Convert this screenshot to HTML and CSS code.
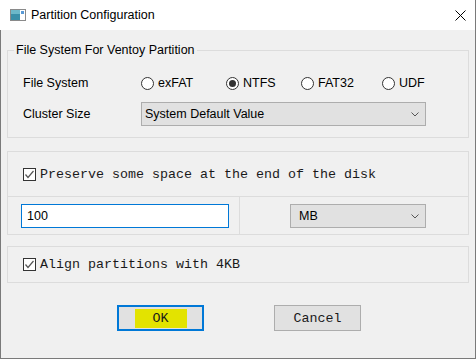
FILE: index.html
```html
<!DOCTYPE html>
<html lang="en">
<head>
    <meta charset="UTF-8">
    <meta name="viewport" content="width=device-width, initial-scale=1.0">
    <title>Partition Configuration</title>
    <link rel="stylesheet" href="styles.css">
</head>
<body>
    <div class="window">
        <div class="titlebar">
            <svg class="app-icon" width="16" height="12" viewBox="0 0 16 12">
                <rect x="0.5" y="0.5" width="15" height="11" fill="#fff" stroke="#8a8a8a"/>
                <rect x="1" y="1" width="9" height="10" fill="#3a8fa8"/>
                <rect x="1" y="1" width="9" height="4" fill="#6cb8c9"/>
                <rect x="11" y="2" width="3" height="3" fill="#5a9ad6"/>
            </svg>
            <span class="title">Partition Configuration</span>
            <svg class="close" width="11" height="11" viewBox="0 0 11 11">
                <path d="M0.5 0.5 L10.5 10.5 M10.5 0.5 L0.5 10.5" stroke="#000" stroke-width="1"/>
            </svg>
        </div>

        <div class="content">
            <fieldset class="group fs-group">
                <legend>File System For Ventoy Partition</legend>
                <div class="row radio-row">
                    <span class="label">File System</span>
                    <div class="radios">
                        <span class="radio"><span class="dot"></span>exFAT</span>
                        <span class="radio checked"><span class="dot"></span>NTFS</span>
                        <span class="radio"><span class="dot"></span>FAT32</span>
                        <span class="radio"><span class="dot"></span>UDF</span>
                    </div>
                </div>
                <div class="row select-row">
                    <span class="label">Cluster Size</span>
                    <div class="combo cluster">
                        <span>System Default Value</span>
                        <svg class="chevron" width="8" height="5" viewBox="0 0 8 5"><path d="M0.5 0.5 L4 4 L7.5 0.5" fill="none" stroke="#555"/></svg>
                    </div>
                </div>
            </fieldset>

            <div class="group preserve">
                <div class="check-row top-row">
                    <span class="check"><svg width="11" height="11" viewBox="0 0 11 11"><path d="M1.5 5.5 L4 8.5 L9.5 2" fill="none" stroke="#555" stroke-width="1.2"/></svg></span>
                    <span class="mono">Preserve some space at the end of the disk</span>
                </div>
                <div class="size-row">
                    <div class="size-cell"><div class="textbox">100</div></div>
                    <div class="unit-cell">
                        <div class="combo unit">
                            <span>MB</span>
                            <svg class="chevron" width="8" height="5" viewBox="0 0 8 5"><path d="M0.5 0.5 L4 4 L7.5 0.5" fill="none" stroke="#555"/></svg>
                        </div>
                    </div>
                </div>
            </div>

            <div class="group align">
                <div class="check-row">
                    <span class="check"><svg width="11" height="11" viewBox="0 0 11 11"><path d="M1.5 5.5 L4 8.5 L9.5 2" fill="none" stroke="#555" stroke-width="1.2"/></svg></span>
                    <span class="mono">Align partitions with 4KB</span>
                </div>
            </div>

            <div class="buttons">
                <button class="btn default"><span class="hl">OK</span></button>
                <button class="btn">Cancel</button>
            </div>
        </div>
    </div>
</body>
</html>
```

FILE: styles.css
```css
body {
    margin: 0;
    background: #ffffff;
    font-family: "Liberation Sans", Arial, sans-serif;
    font-size: 12.5px;
    color: #000;
}

.window {
    width: 476px;
    height: 359px;
    box-sizing: border-box;
    border-right: 1px solid #7a7a7a;
    display: flex;
    flex-direction: column;
}

.titlebar {
    height: 30px;
    background: #ffffff;
    display: flex;
    align-items: center;
    padding-left: 10px;
    flex-shrink: 0;
}

.title {
    margin-left: 5px;
    font-size: 12.5px;
    flex: 1;
}

.close {
    margin-right: 9px;
}

.content {
    flex: 1;
    background: #f0f0f0;
    border-left: 1px solid #7a7a7a;
    border-bottom: 1px solid #7a7a7a;
    padding: 0 6px;
}

.group {
    border: 1px solid #dcdcdc;
    box-sizing: border-box;
    width: 462px;
}

fieldset.fs-group {
    margin: 12px 0 0 0;
    padding: 0 0 11px 0;
    min-width: 0;
}

legend {
    margin-left: 6px;
    padding: 0 2px;
    line-height: 16px;
    font-size: 12.5px;
}

.row {
    display: flex;
    align-items: center;
    padding-left: 15px;
}

.label {
    width: 118px;
}

.radio-row {
    margin-top: 14px;
    height: 22px;
}

.select-row {
    margin-top: 8px;
    height: 24px;
}

.radios {
    display: grid;
    grid-template-columns: 85px 75px 81px auto;
}

.radio {
    display: flex;
    align-items: center;
}

.dot {
    width: 11px;
    height: 11px;
    border: 1px solid #333;
    border-radius: 50%;
    background: #fff;
    margin-right: 4px;
    display: flex;
    align-items: center;
    justify-content: center;
}

.radio.checked .dot::after {
    content: "";
    width: 7px;
    height: 7px;
    border-radius: 50%;
    background: #333;
}

.combo {
    height: 24px;
    box-sizing: border-box;
    border: 1px solid #adadad;
    background: #e1e1e1;
    display: flex;
    align-items: center;
    justify-content: space-between;
    padding: 0 6px 0 3px;
}

.cluster {
    width: 285px;
}

.unit {
    width: 136px;
    padding-left: 8px;
}

.preserve {
    margin-top: 13px;
}

.check-row {
    display: flex;
    align-items: center;
    padding-left: 15px;
}

.top-row {
    height: 44px;
    border-bottom: 1px solid #dcdcdc;
}

.check {
    width: 13px;
    height: 13px;
    box-sizing: border-box;
    border: 1px solid #333;
    background: #fff;
    margin-right: 4px;
    display: flex;
}

.mono {
    font-family: "Liberation Mono", "Courier New", monospace;
    font-size: 13.33px;
    color: #1a1a1a;
}

.size-row {
    display: flex;
    height: 37px;
}

.size-cell {
    width: 232px;
    border-right: 1px solid #dcdcdc;
    padding: 7px 0 0 13px;
    box-sizing: border-box;
}

.unit-cell {
    padding: 7px 0 0 50px;
}

.textbox {
    width: 208px;
    height: 24px;
    box-sizing: border-box;
    border: 1px solid #0078d7;
    background: #fff;
    padding-left: 5px;
    display: flex;
    align-items: center;
}

.align {
    margin-top: 11px;
}

.align .check-row {
    height: 35px;
}

.buttons {
    display: flex;
    gap: 70px;
    margin: 22px 0 0 110px;
}

.btn {
    width: 87px;
    height: 26px;
    border: 1px solid #adadad;
    background: #e1e1e1;
    font-family: "Liberation Mono", "Courier New", monospace;
    font-size: 13.33px;
    color: #1a1a1a;
    padding: 0;
    display: flex;
    align-items: center;
    justify-content: center;
}

.btn.default {
    border: 2px solid #0078d7;
}

.hl {
    background: #e3e300;
    width: 52px;
    height: 19px;
    display: flex;
    align-items: center;
    justify-content: center;
}
```
